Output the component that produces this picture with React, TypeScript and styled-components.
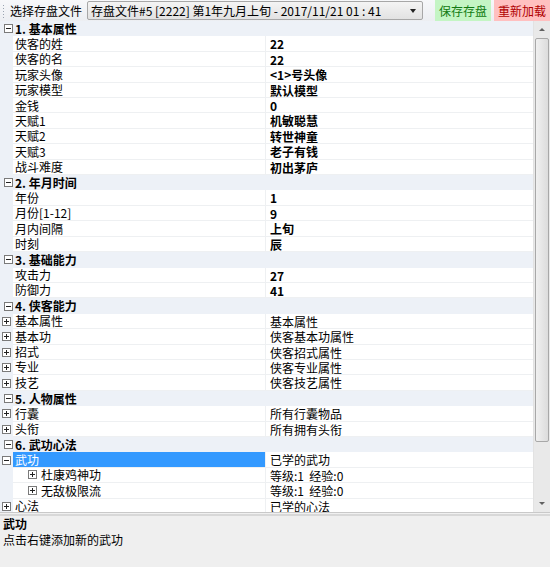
import React from "react";
import styled, { createGlobalStyle } from "styled-components";

const GlobalStyle = createGlobalStyle`
  html, body { margin: 0; padding: 0; background: #f0f0f0; }
  body { font-family: "Noto Sans CJK SC", "Liberation Sans", sans-serif; font-size: 12px; color: #000; }
  * { box-sizing: border-box; }
`;

const ROW_H = 15.42;

const Window = styled.div`
  width: 550px;
  height: 567px;
  display: flex;
  flex-direction: column;
  background: #f0f0f0;
  overflow: hidden;
`;

const Toolbar = styled.div`
  height: 21px;
  display: flex;
  align-items: center;
  background: linear-gradient(#f7f8fa, #eceef2);
  flex-shrink: 0;
`;

const Grip = styled.div`
  width: 3px;
  height: 14px;
  margin: 0 3px 0 2px;
  background-image: radial-gradient(circle, #9aa3b0 0.8px, transparent 1px);
  background-size: 3px 3px;
`;

const ToolLabel = styled.span`
  font-size: 12px;
  padding: 0 2px;
  white-space: nowrap;
  color: #000;
`;

const Combo = styled.div`
  margin-left: 3px;
  width: 336px;
  height: 19px;
  border: 1px solid #a7a7a7;
  border-radius: 2px;
  background: linear-gradient(#f4f4f4, #e2e2e2);
  display: flex;
  align-items: center;
  padding-left: 3px;
  font-size: 12px;
  white-space: nowrap;
  justify-content: space-between;
`;

const ComboArrow = styled.span`
  width: 0;
  height: 0;
  margin-right: 6px;
  border-left: 3.5px solid transparent;
  border-right: 3.5px solid transparent;
  border-top: 4px solid #222;
`;

const Spacer = styled.div`
  flex: 1;
`;

const ToolButton = styled.div<{ $bg: string; $fg: string }>`
  height: 21px;
  display: flex;
  align-items: center;
  padding: 0 4px;
  background: ${(p) => p.$bg};
  color: ${(p) => p.$fg};
  font-size: 12px;
  white-space: nowrap;
  margin-left: 3px;
`;

const GridArea = styled.div`
  height: 492px;
  display: flex;
  background: #fff;
  flex-shrink: 0;
  border-bottom: 1px solid #c9c9c9;
`;

const GridBody = styled.div`
  flex: 1;
  overflow: hidden;
  background: #edf1f7;
`;

const Scrollbar = styled.div`
  width: 17px;
  display: flex;
  flex-direction: column;
  align-items: center;
  background: #e9e9e9;
  border-left: 1px solid #e2e2e2;
`;

const ScrollArrow = styled.div<{ $up?: boolean }>`
  height: 17px;
  width: 100%;
  display: flex;
  align-items: center;
  justify-content: center;
  &::after {
    content: "";
    border-left: 3px solid transparent;
    border-right: 3px solid transparent;
    ${(p) => (p.$up ? "border-bottom: 3px solid #606060;" : "border-top: 3px solid #606060;")}
  }
`;

const Thumb = styled.div`
  width: 14px;
  height: 404px;
  border: 1px solid #a8a8a8;
  border-radius: 2px;
  background: linear-gradient(90deg, #f0f0f0, #dcdcdc);
`;

const TrackFill = styled.div`
  flex: 1;
`;

const Row = styled.div`
  height: ${ROW_H}px;
  display: grid;
  grid-template-columns: 13px 253px 1fr;
  align-items: stretch;
  line-height: ${ROW_H}px;
`;

const CatRow = styled.div`
  height: ${ROW_H}px;
  display: flex;
  align-items: center;
  background: #edf1f7;
  font-weight: bold;
  line-height: ${ROW_H}px;
  white-space: nowrap;
`;

const Gutter = styled.div`
  background: #edf1f7;
  display: flex;
  align-items: center;
  justify-content: center;
`;

const LabelCell = styled.div<{ $selected?: boolean; $indent?: number }>`
  display: flex;
  align-items: center;
  padding-left: ${(p) => (p.$indent ?? 0) + 2}px;
  background: ${(p) => (p.$selected ? "#3399ff" : "#fff")};
  color: ${(p) => (p.$selected ? "#fff" : "#000")};
  border-bottom: 1px solid #eef0f2;
  border-right: 1px solid #eef0f2;
  white-space: nowrap;
  overflow: hidden;
`;

const ValueCell = styled.div<{ $bold?: boolean }>`
  padding-left: 4px;
  background: #fff;
  font-weight: ${(p) => (p.$bold ? "bold" : "normal")};
  border-bottom: 1px solid #eef0f2;
  white-space: nowrap;
  overflow: hidden;
`;

const Box = styled.span<{ $plus?: boolean }>`
  position: relative;
  display: inline-block;
  width: 9px;
  height: 9px;
  border: 1px solid #7a7a7a;
  background: #fff;
  flex-shrink: 0;
  &::before {
    content: "";
    position: absolute;
    left: 1px;
    top: 3px;
    width: 5px;
    height: 1px;
    background: #222;
  }
  &::after {
    content: "";
    position: absolute;
    left: 3px;
    top: 1px;
    width: 1px;
    height: 5px;
    background: #222;
    display: ${(p) => (p.$plus ? "block" : "none")};
  }
`;

const CatIcon = styled.span`
  width: 15px;
  display: flex;
  justify-content: center;
  padding-left: 1px;
`;

const InlineBox = styled.span`
  display: inline-flex;
  margin-right: 4px;
`;

const Desc = styled.div`
  flex: 1;
  border-top: 2px solid #d8d8d8;
  margin-top: 1px;
  padding: 0 3px;
  background: #efefef;
  line-height: 16px;
`;

const DescTitle = styled.div`
  font-weight: bold;
`;

type Item = {
  label: string;
  value: string;
  bold?: boolean;
  expandable?: "plus" | "minus";
  selected?: boolean;
  indent?: number;
};

type Category = { title: string; items: Item[] };

const data: Category[] = [
  {
    title: "1. 基本属性",
    items: [
      { label: "侠客的姓", value: "22", bold: true },
      { label: "侠客的名", value: "22", bold: true },
      { label: "玩家头像", value: "<1>号头像", bold: true },
      { label: "玩家模型", value: "默认模型", bold: true },
      { label: "金钱", value: "0", bold: true },
      { label: "天赋1", value: "机敏聪慧", bold: true },
      { label: "天赋2", value: "转世神童", bold: true },
      { label: "天赋3", value: "老子有钱", bold: true },
      { label: "战斗难度", value: "初出茅庐", bold: true },
    ],
  },
  {
    title: "2. 年月时间",
    items: [
      { label: "年份", value: "1", bold: true },
      { label: "月份[1-12]", value: "9", bold: true },
      { label: "月内间隔", value: "上旬", bold: true },
      { label: "时刻", value: "辰", bold: true },
    ],
  },
  {
    title: "3. 基础能力",
    items: [
      { label: "攻击力", value: "27", bold: true },
      { label: "防御力", value: "41", bold: true },
    ],
  },
  {
    title: "4. 侠客能力",
    items: [
      { label: "基本属性", value: "基本属性", expandable: "plus" },
      { label: "基本功", value: "侠客基本功属性", expandable: "plus" },
      { label: "招式", value: "侠客招式属性", expandable: "plus" },
      { label: "专业", value: "侠客专业属性", expandable: "plus" },
      { label: "技艺", value: "侠客技艺属性", expandable: "plus" },
    ],
  },
  {
    title: "5. 人物属性",
    items: [
      { label: "行囊", value: "所有行囊物品", expandable: "plus" },
      { label: "头衔", value: "所有拥有头衔", expandable: "plus" },
    ],
  },
  {
    title: "6. 武功心法",
    items: [
      { label: "武功", value: "已学的武功", expandable: "minus", selected: true },
      { label: "杜康鸡神功", value: "等级:1  经验:0", expandable: "plus", indent: 13 },
      { label: "无敌极限流", value: "等级:1  经验:0", expandable: "plus", indent: 13 },
      { label: "心法", value: "已学的心法", expandable: "plus" },
    ],
  },
];

function ItemRow({ item }: { item: Item }) {
  const topLevelToggle = item.expandable && !item.indent;
  return (
    <Row>
      <Gutter>{topLevelToggle && <Box $plus={item.expandable === "plus"} />}</Gutter>
      <LabelCell $selected={item.selected} $indent={item.indent}>
        {item.indent ? (
          <InlineBox>
            <Box $plus={item.expandable === "plus"} />
          </InlineBox>
        ) : null}
        {item.label}
      </LabelCell>
      <ValueCell $bold={item.bold}>{item.value.replace(/  /g, "\u00a0\u00a0")}</ValueCell>
    </Row>
  );
}

export default function App() {
  return (
    <Window>
      <GlobalStyle />
      <Toolbar>
        <Grip />
        <ToolLabel>选择存盘文件</ToolLabel>
        <Combo>
          <span>存盘文件#5 [2222] 第1年九月上旬 - 2017/11/21 01 : 41</span>
          <ComboArrow />
        </Combo>
        <Spacer />
        <ToolButton $bg="#c4f5c4" $fg="#127a12">保存存盘</ToolButton>
        <ToolButton $bg="#ffc0c0" $fg="#b00000">重新加载</ToolButton>
      </Toolbar>
      <GridArea>
        <GridBody>
          {data.map((cat) => (
            <React.Fragment key={cat.title}>
              <CatRow>
                <CatIcon>
                  <Box />
                </CatIcon>
                {cat.title}
              </CatRow>
              {cat.items.map((it) => (
                <ItemRow key={it.label} item={it} />
              ))}
            </React.Fragment>
          ))}
        </GridBody>
        <Scrollbar>
          <ScrollArrow $up />
          <Thumb />
          <TrackFill />
          <ScrollArrow />
        </Scrollbar>
      </GridArea>
      <Desc>
        <DescTitle>武功</DescTitle>
        <div>点击右键添加新的武功</div>
      </Desc>
    </Window>
  );
}
